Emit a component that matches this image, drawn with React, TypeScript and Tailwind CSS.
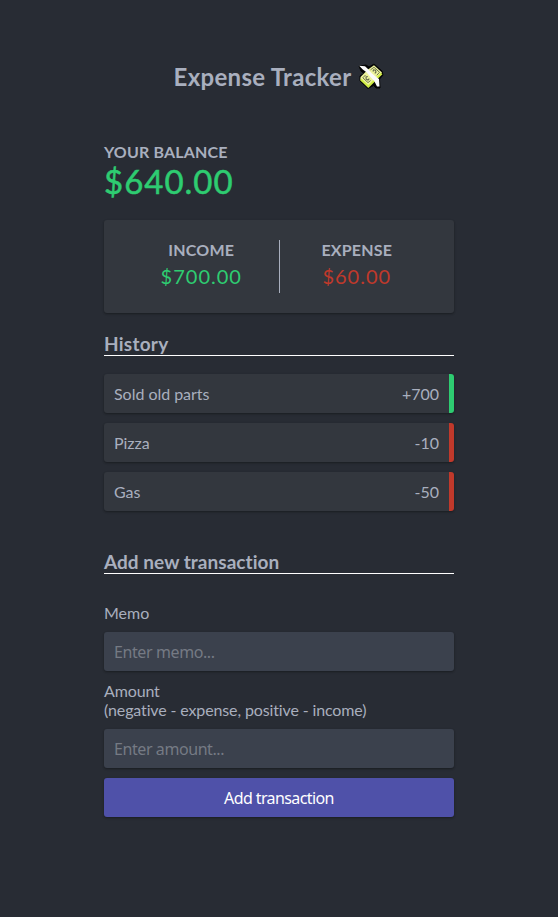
import React from "react";

const history = [
  { text: "Sold old parts", amount: "+700", border: "border-[#2ecc71]" },
  { text: "Pizza", amount: "-10", border: "border-[#c0392b]" },
  { text: "Gas", amount: "-50", border: "border-[#c0392b]" },
];

const shadow = "shadow-[0_1px_3px_rgba(0,0,0,0.12),0_1px_2px_rgba(0,0,0,0.24)]";
const control = "h-[39px] w-full rounded-[3px] font-['Noto_Sans',sans-serif] text-base";

function FlyingMoney() {
  return (
    <svg width="26" height="27" viewBox="0 0 26 27" className="block">
      <path
        d="M1 3L8 2L11 4L16 1L24 8L25 12L21.5 16L22 25L18 25L15.5 22.5L10 25.5L2 18L2 13L6 10.5L3 8Z"
        fill="#050505"
        stroke="#050505"
        strokeWidth="1"
        strokeLinejoin="round"
      />
      <path d="M10 6.5L16 2.2L24 9.5L10.5 24L2.3 16.5L2.5 14Z" fill="#edf39c" />
      <path d="M2.8 16.5L10.3 23.5L23.7 10.5" fill="none" stroke="#cfec45" strokeWidth="2" />
      <path d="M12.5 6.8L16 4.3L21.5 9.3L18.8 12.3M7.5 12L4.8 14.8L10 19.6L12.6 17.5" fill="none" stroke="#70774f" strokeWidth="1" />
      <path d="M15 8.5L15.5 6.8L17.5 7.2L18 9L16.8 10.3M9.8 13.4L8 14L8.2 16.2L10 17L11.3 15.7" fill="none" stroke="#62684b" strokeWidth="1.1" />
      <path d="M1.2 2.8L7 3.2L10 6L13.5 10L17.5 13.5L21 16L21.5 23.5L19 23.5L16.5 18.5L12.5 14L8.5 9.2L4.5 6.2Z" fill="#fafafa" />
    </svg>
  );
}

export default function App() {
  return (
    <div className="flex h-[917px] flex-col items-center bg-[#282c34] pt-[62px] font-[Lato,sans-serif] text-base leading-[19px] text-[#a9afbe] [font-variant-ligatures:none]">
      <h2 className="flex h-[29px] items-center gap-[7px] text-2xl leading-[29px] font-bold tracking-[0.3px]">
        <span>Expense Tracker</span>
        <FlyingMoney />
      </h2>

      <main className="mt-[51px] w-[350px]">
        <h4 className="font-bold tracking-[0.15px]">YOUR BALANCE</h4>
        <h1 className="text-[33px] leading-10 tracking-[1px] text-[#2ecc71] [-webkit-text-stroke:0.5px_#2ecc71]">$640.00</h1>

        <section className={`mt-[19px] flex h-[93px] rounded-[3px] bg-[#33373e] p-5 text-center ${shadow}`}>
          <div className="flex-1 border-r border-[#a9afbe]">
            <h4 className="font-bold leading-5 tracking-[0.2px]">INCOME</h4>
            <p className="mt-1 text-xl leading-6 tracking-[1px] text-[#2ecc71]">$700.00</p>
          </div>
          <div className="flex-1">
            <h4 className="font-bold leading-5 tracking-[0.2px]">EXPENSE</h4>
            <p className="mt-1 text-xl leading-6 tracking-[1px] text-[#c0392b]">$60.00</p>
          </div>
        </section>

        <h3 className="mt-5 border-b border-white text-[19px] leading-[22px] font-bold tracking-[0.25px]">History</h3>
        <ul className="mt-[18px] flex flex-col gap-[10px]">
          {history.map((item) => (
            <li
              key={item.text}
              className={`flex h-[39px] items-center justify-between rounded-[3px] border-r-[5px] bg-[#33373e] px-[10px] tracking-[-0.03px] ${item.border} ${shadow}`}
            >
              <span>{item.text}</span>
              <span>{item.amount}</span>
            </li>
          ))}
        </ul>

        <h3 className="mt-10 border-b border-white text-[19px] leading-[22px] font-bold tracking-[0.04px]">Add new transaction</h3>
        <form className="mt-[29px]">
          <label className="block" htmlFor="memo">Memo</label>
          <input
            id="memo"
            type="text"
            placeholder="Enter memo..."
            className={`mt-[10px] block bg-[#3b414d] px-[10px] tracking-[-0.4px] placeholder:text-[#757a84] ${control} ${shadow}`}
          />
          <label className="mt-[10px] block tracking-[-0.13px]" htmlFor="amount">
            Amount
            <br />
            (negative - expense, positive - income)
          </label>
          <input
            id="amount"
            type="text"
            placeholder="Enter amount..."
            className={`mt-[10px] block bg-[#3b414d] px-[10px] tracking-[-0.42px] placeholder:text-[#757a84] ${control} ${shadow}`}
          />
          <button type="button" className={`mt-[10px] block bg-[#4f51a9] tracking-[-0.6px] text-white ${control} ${shadow}`}>
            Add transaction
          </button>
        </form>
      </main>
    </div>
  );
}
